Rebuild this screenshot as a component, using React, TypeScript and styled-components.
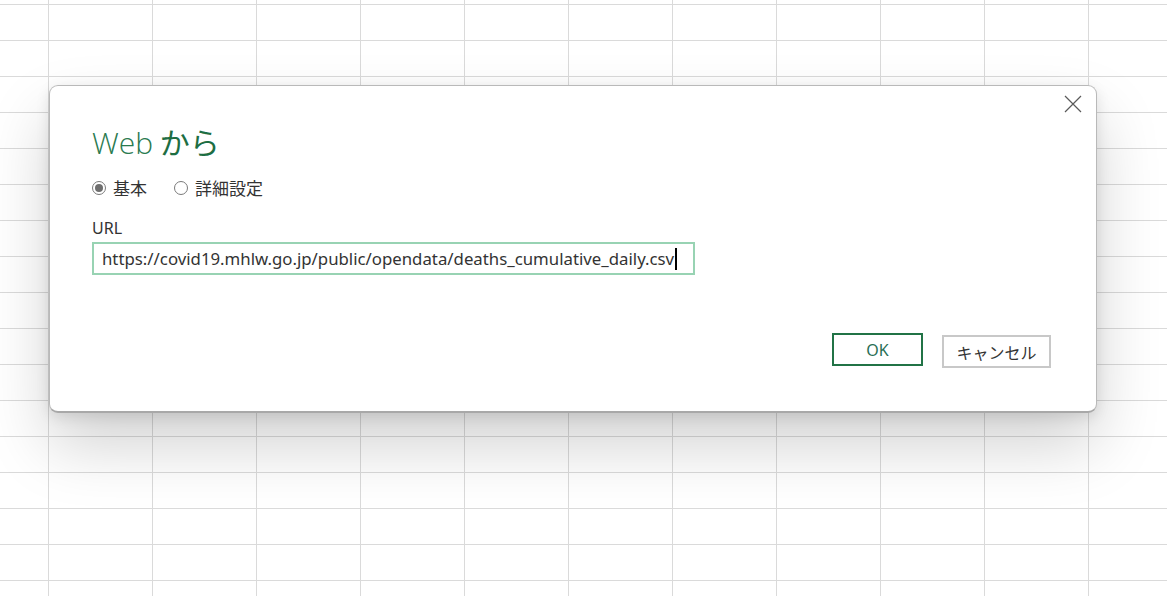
import React from 'react';
import styled, { createGlobalStyle } from 'styled-components';

const GlobalStyle = createGlobalStyle`
  html, body {
    margin: 0;
    padding: 0;
    background: #ffffff;
  }
  body {
    font-family: 'Segoe UI', 'Noto Sans', 'Noto Sans CJK JP', sans-serif;
  }
`;

const App: React.FC = () => {
  return (
    <Sheet>
      <GlobalStyle />
      <Dialog>
        <CloseButton aria-label="閉じる">
          <svg width="18" height="18" viewBox="0 0 18 18">
            <path d="M1 1 L17 17 M17 1 L1 17" stroke="#5a5a5a" strokeWidth="1.2" fill="none" />
          </svg>
        </CloseButton>
        <Title>
          <TitleLight>Web</TitleLight> から
        </Title>
        <RadioRow>
          <RadioOption>
            <RadioDot checked />
            基本
          </RadioOption>
          <RadioOption>
            <RadioDot />
            詳細設定
          </RadioOption>
        </RadioRow>
        <FieldLabel>URL</FieldLabel>
        <UrlBox>
          https://covid19.mhlw.go.jp/public/opendata/deaths_cumulative_daily.csv
          <Caret />
        </UrlBox>
        <Footer>
          <DialogButton primary>OK</DialogButton>
          <DialogButton>キャンセル</DialogButton>
        </Footer>
      </Dialog>
    </Sheet>
  );
};

export default App;

const Sheet = styled.div`
  min-height: 596px;
  box-sizing: border-box;
  padding: 85px 0 0 49px;
  background-color: #ffffff;
  background-image: linear-gradient(to right, #dadada 1px, transparent 1px),
    linear-gradient(to bottom, #dadada 1px, transparent 1px);
  background-size: 104px 36px;
  background-position: 48px 4px;
`;

const Dialog = styled.div`
  position: relative;
  width: 1048px;
  height: 328px;
  box-sizing: border-box;
  padding: 37px 44px 0 42px;
  background: #ffffff;
  border: 1px solid #b9b9b9;
  border-bottom: 2px solid #a8a8a8;
  border-radius: 9px;
  box-shadow: 0 32px 64px rgba(0, 0, 0, 0.18), 0 4px 14px rgba(0, 0, 0, 0.1);
`;

const CloseButton = styled.div`
  position: absolute;
  top: 9px;
  right: 14px;
  width: 18px;
  height: 18px;
  display: flex;
`;

const Title = styled.div`
  font-size: 30px;
  line-height: 36px;
  color: #1d6e43;
  font-family: 'Noto Sans CJK JP', sans-serif;
`;

const TitleLight = styled.span`
  font-family: 'Open Sans', 'Noto Sans', sans-serif;
  font-weight: 300;
  color: #2a7a4f;
`;

const RadioRow = styled.div`
  display: flex;
  gap: 27px;
  margin-top: 15px;
`;

const RadioOption = styled.label`
  display: flex;
  align-items: center;
  gap: 7px;
  font-size: 17px;
  line-height: 24px;
  color: #333333;
  font-family: 'Noto Sans CJK JP', sans-serif;
`;

const RadioDot = styled.span<{ checked?: boolean }>`
  width: 14px;
  height: 14px;
  box-sizing: border-box;
  border-radius: 50%;
  border: 1px solid #7a7a7a;
  display: flex;
  align-items: center;
  justify-content: center;
  &::after {
    content: '';
    width: 8px;
    height: 8px;
    border-radius: 50%;
    background: ${({ checked }) => (checked ? '#6e6e6e' : 'transparent')};
  }
`;

const FieldLabel = styled.div`
  margin-top: 18px;
  font-size: 16px;
  line-height: 20px;
  color: #333333;
  font-family: 'Noto Sans', sans-serif;
`;

const UrlBox = styled.div`
  margin-top: 4px;
  width: 603px;
  height: 33px;
  box-sizing: border-box;
  border: 2px solid #98d3b3;
  padding: 0 0 0 8px;
  display: flex;
  align-items: center;
  font-size: 16.8px;
  color: #333333;
  font-family: 'Noto Sans', sans-serif;
  white-space: nowrap;
`;

const Caret = styled.span`
  width: 2px;
  height: 22px;
  background: #000000;
  margin-left: 1px;
`;

const Footer = styled.div`
  display: flex;
  justify-content: flex-end;
  align-items: flex-start;
  gap: 19px;
  margin-top: 58px;
  padding-right: 1px;
`;

const DialogButton = styled.button<{ primary?: boolean }>`
  height: 33px;
  min-width: ${({ primary }) => (primary ? '91px' : '109px')};
  margin-top: ${({ primary }) => (primary ? '0' : '2px')};
  box-sizing: border-box;
  background: #ffffff;
  border: 2px solid ${({ primary }) => (primary ? '#217346' : '#c8c8c8')};
  color: ${({ primary }) => (primary ? '#2a6f55' : '#333333')};
  font-size: 16px;
  font-family: 'Noto Sans', 'Noto Sans CJK JP', sans-serif;
  padding: 0 10px;
  cursor: pointer;
`;
